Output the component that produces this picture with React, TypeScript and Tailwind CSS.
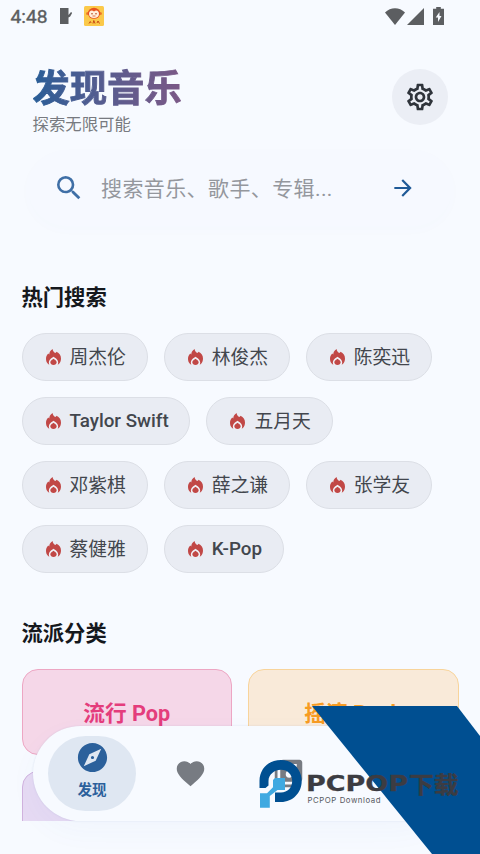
import React from "react";
import {
  MdArrowForward,
  MdExplore,
  MdFavorite,
  MdLibraryMusic,
  MdOutlineSettings,
  MdSearch,
} from "react-icons/md";

const HOT_SEARCHES = [
  "周杰伦",
  "林俊杰",
  "陈奕迅",
  "Taylor Swift",
  "五月天",
  "邓紫棋",
  "薛之谦",
  "张学友",
  "蔡健雅",
  "K-Pop",
];

const GENRES = [
  { name: "流行 Pop", style: "bg-[#f5d7e8] border-[#eda6c3] text-[#e43d7c]" },
  { name: "摇滚 Rock", style: "bg-[#f9ead9] border-[#f8d49b] text-[#f79b22]" },
  { name: "", style: "bg-[#e6daf3] border-[#d0b2de] text-[#9c27b0]" },
  { name: "", style: "bg-[#d8e8f8] border-[#a3c9ee] text-[#2196f3]" },
];

const Flame = () => (
  <svg viewBox="0 0 15 16" className="-mt-px h-4 w-[15px] shrink-0">
    <path
      d="M6.600 0C6.800 1.800 7.700 2.900 8.700 3.800c.9.300 1.500-.2 1.900-1C13.400 4 15 6.500 15 9.600c0 2.300-.7 4-1.900 5.200L11.500 16h-8l-1.600-1.200C.7 13.600 0 12 0 9.800 0 7.300 1 5.800 2.300 4.500l1 1C3.200 3.300 4.300 1.400 6.600 0Z"
      fill="#c14846"
    />
    <path
      d="M3.300 15.900C2 12.900 3.400 10.200 7.500 7.800c4.100 2.400 5.500 5.100 4.200 8.100Z"
      fill="#f0f1f6"
    />
    <path
      d="M7.500 9.700c2 1.300 3.200 2.200 3.200 3.600 0 1.600-1.400 2.700-3.200 2.700s-3.200-1.100-3.200-2.700c0-1.400 1.200-2.300 3.200-3.600Z"
      fill="#c14846"
    />
  </svg>
);

const StatusBar = () => (
  <div className="flex h-8 items-center justify-between pl-[10.500px] pr-[37.500px] text-[#5c5e61]">
    <div className="flex items-center">
      <span className="w-[48.500px] pt-0.5 font-['Roboto'] text-[19.200px] leading-none [-webkit-text-stroke:0.4px_#5c5e61]">
        4:48
      </span>
      <svg viewBox="0 0 13 16" className="h-4 w-[13px]" fill="currentColor">
        <path d="M1 0h8.500v7L12 4l1.200 1-2 3.500-1.700 1V16H1Z" />
      </svg>
      <svg viewBox="0 0 20 20" className="ml-3 h-5 w-5">
        <rect width="20" height="20" rx="1.500" fill="#fbc94a" />
        <circle cx="3.600" cy="7.500" r="1.600" fill="#ef7b2c" />
        <circle cx="16.400" cy="7.500" r="1.600" fill="#ef7b2c" />
        <ellipse cx="10" cy="7.300" rx="6.200" ry="5.500" fill="#e8541f" />
        <path
          d="M10 5.600C7.500 3.500 5 5 5 8c0 2.600 2.200 4 5 4s5-1.400 5-4c0-3-2.500-4.500-5-2.400Z"
          fill="#fff0dc"
        />
        <circle cx="8" cy="7.700" r=".8" fill="#b8431c" />
        <circle cx="12" cy="7.700" r=".8" fill="#b8431c" />
        <path d="M8.500 10h3" stroke="#d5532a" strokeWidth=".8" />
        <path
          d="M5 17.500l1.300-2 .8 1.500M9 17.500l.8-3 1.200 3M13 17l1-2 1.500 2.500"
          stroke="#c94c15"
          strokeWidth="1"
          fill="none"
        />
      </svg>
    </div>
    <div className="flex items-center">
      <svg viewBox="0 0 20 17" className="h-[17px] w-5" fill="currentColor">
        <path d="M0 4.500C5.500-1.200 14.500-1.200 20 4.500L10 17Z" />
      </svg>
      <svg viewBox="0 0 17 17" className="ml-0.5 h-[17px] w-[17px]" fill="currentColor">
        <path d="M17 0v17H0Z" />
      </svg>
      <svg viewBox="0 0 11 18" className="ml-[9px] mr-[-1px] h-[18px] w-[11px]">
        <path
          d="M3.200 0h4.600v1.800H11V18H0V1.800h3.200Z"
          fill="currentColor"
        />
        <path d="M6.500 5 2.700 10.500H5V15l3.500-6H6.500Z" fill="#f7faff" />
      </svg>
    </div>
  </div>
);

// site badge that sits over the bottom right corner
const Badge = () => (
  <svg
    viewBox="0 0 240 160"
    className="pointer-events-none absolute bottom-0 right-0 h-40 w-60"
  >
    <path d="M72 12h145l23 30v118h-48Z" fill="#004f91" />
    <path
      d="M19.500 94V87C19.500 74.500 29 66 41 66s20.700 9.500 20.700 21S53 108 41 108h-6V98.500h6c6.700 0 11.200-5 11.200-11.500S47.500 75.800 41 75.800 28.500 80.500 28.500 87v4.500L25.500 94Z"
      fill="#004f91"
    />
    <path
      d="M35 84H45v12h-7.500L29.800 102v11.800H20v-14.500h7l6-6V86Z"
      fill="#3fa9e1"
    />
    <g fill="#3c3c42" fontWeight="700">
      <text
        x="66"
        y="97.300"
        fontSize="21.500"
        textLength="102"
        lengthAdjust="spacingAndGlyphs"
        stroke="#3c3c42"
        strokeWidth=".3"
        className="font-['DejaVu_Sans']"
      >
        PCPOP
      </text>
      <text
        x="169"
        y="98.500"
        fontSize="22.500"
        textLength="49.500"
        lengthAdjust="spacingAndGlyphs"
        stroke="#3c3c42"
        strokeWidth=".4"
        className="font-['Noto_Sans_CJK_SC']"
      >
        下载
      </text>
    </g>
    <text
      x="67.500"
      y="108.500"
      fontSize="7.800"
      textLength="73"
      fill="#55585e"
      className="font-['Inter']"
    >
      PCPOP Download
    </text>
  </svg>
);

const App = () => {
  return (
    <main className="relative h-[854px] w-[480px] overflow-hidden bg-[#f7faff] font-['Roboto','Noto_Sans_CJK_SC',sans-serif]">
      <StatusBar />

      <header className="flex items-start justify-between pl-[32.500px] pr-8">
        <div className="pt-[34px]">
          <h1 className="w-fit bg-gradient-to-r from-[#275d97] to-[#7b5886] bg-clip-text text-[37.300px] font-bold leading-[46px] text-transparent [-webkit-text-stroke:0.9px_transparent]">
            发现音乐
          </h1>
          <p className="mt-px text-[16.400px] leading-6 text-[#777a80]">
            探索无限可能
          </p>
        </div>
        <button className="mt-[37px] flex h-14 w-14 items-center justify-center rounded-full bg-[#ebeef5] text-[#2f343b]">
          <MdOutlineSettings size={32} />
        </button>
      </header>

      <div className="mx-7 mt-[13px] flex h-[76px] items-center rounded-full bg-[#f6f9ff] pl-[25px] pr-[36px] shadow-[0_4px_14px_rgba(60,100,170,0.015)]">
        <MdSearch size={32} className="text-[#3f6fa6]" />
        <span className="ml-4 flex-1 whitespace-nowrap pt-[3px] text-[21px] tracking-[0.400px] text-[#94979d]">
          搜索音乐、歌手、专辑...
        </span>
        <MdArrowForward size={26} className="text-[#1f5a97]" />
      </div>

      <section className="px-[21.500px] pt-14">
        <h2 className="text-[21.300px] font-bold leading-8 text-[#15181d]">热门搜索</h2>
        <div className="mt-[19px] flex flex-wrap gap-4">
          {HOT_SEARCHES.map((name) => (
            <button
              key={name}
              className="flex h-12 items-center gap-[9px] rounded-full border border-[#dcdfe6] bg-[#e9ecf3] pl-[23px] pr-[20.800px] text-[18.800px] font-medium text-[#42464d]"
            >
              <Flame />
              <span className={/[A-Z]/.test(name) ? "" : "pt-0.5 font-normal"}>{name}</span>
            </button>
          ))}
        </div>
      </section>

      <section className="px-[21.500px] pt-[45px]">
        <h2 className="text-[21.300px] font-bold leading-8 text-[#15181d]">流派分类</h2>
        <div className="mt-[19px] grid h-[152px] grid-cols-2 content-start gap-4 overflow-hidden">
          {GENRES.map((genre, i) => (
            <div
              key={i}
              className={`flex h-[86px] items-center justify-center rounded-2xl border-[1.500px] pt-1 text-[21.700px] font-bold ${genre.style}`}
            >
              {genre.name}
            </div>
          ))}
        </div>
      </section>

      <nav className="absolute bottom-[33px] left-[33px] flex h-[95px] w-[414px] items-center rounded-full bg-[#f7faff] shadow-[0_0_2px_rgba(60,90,150,0.14),0_10px_30px_rgba(60,100,190,0.035)]">
        <div className="ml-[15px] flex h-[75px] w-[88px] flex-col items-center rounded-full bg-[#dfe7f2] pt-[4px] text-[#2b609b]">
          <MdExplore size={35} />
          <span className="mt-[6px] text-[14.500px] font-bold leading-5">发现</span>
        </div>
        <MdFavorite size={33} className="ml-[38px] text-[#777b82]" />
        <MdLibraryMusic size={33} className="ml-[65px] text-[#777b82]" />
      </nav>

      <Badge />
    </main>
  );
};

export default App;
